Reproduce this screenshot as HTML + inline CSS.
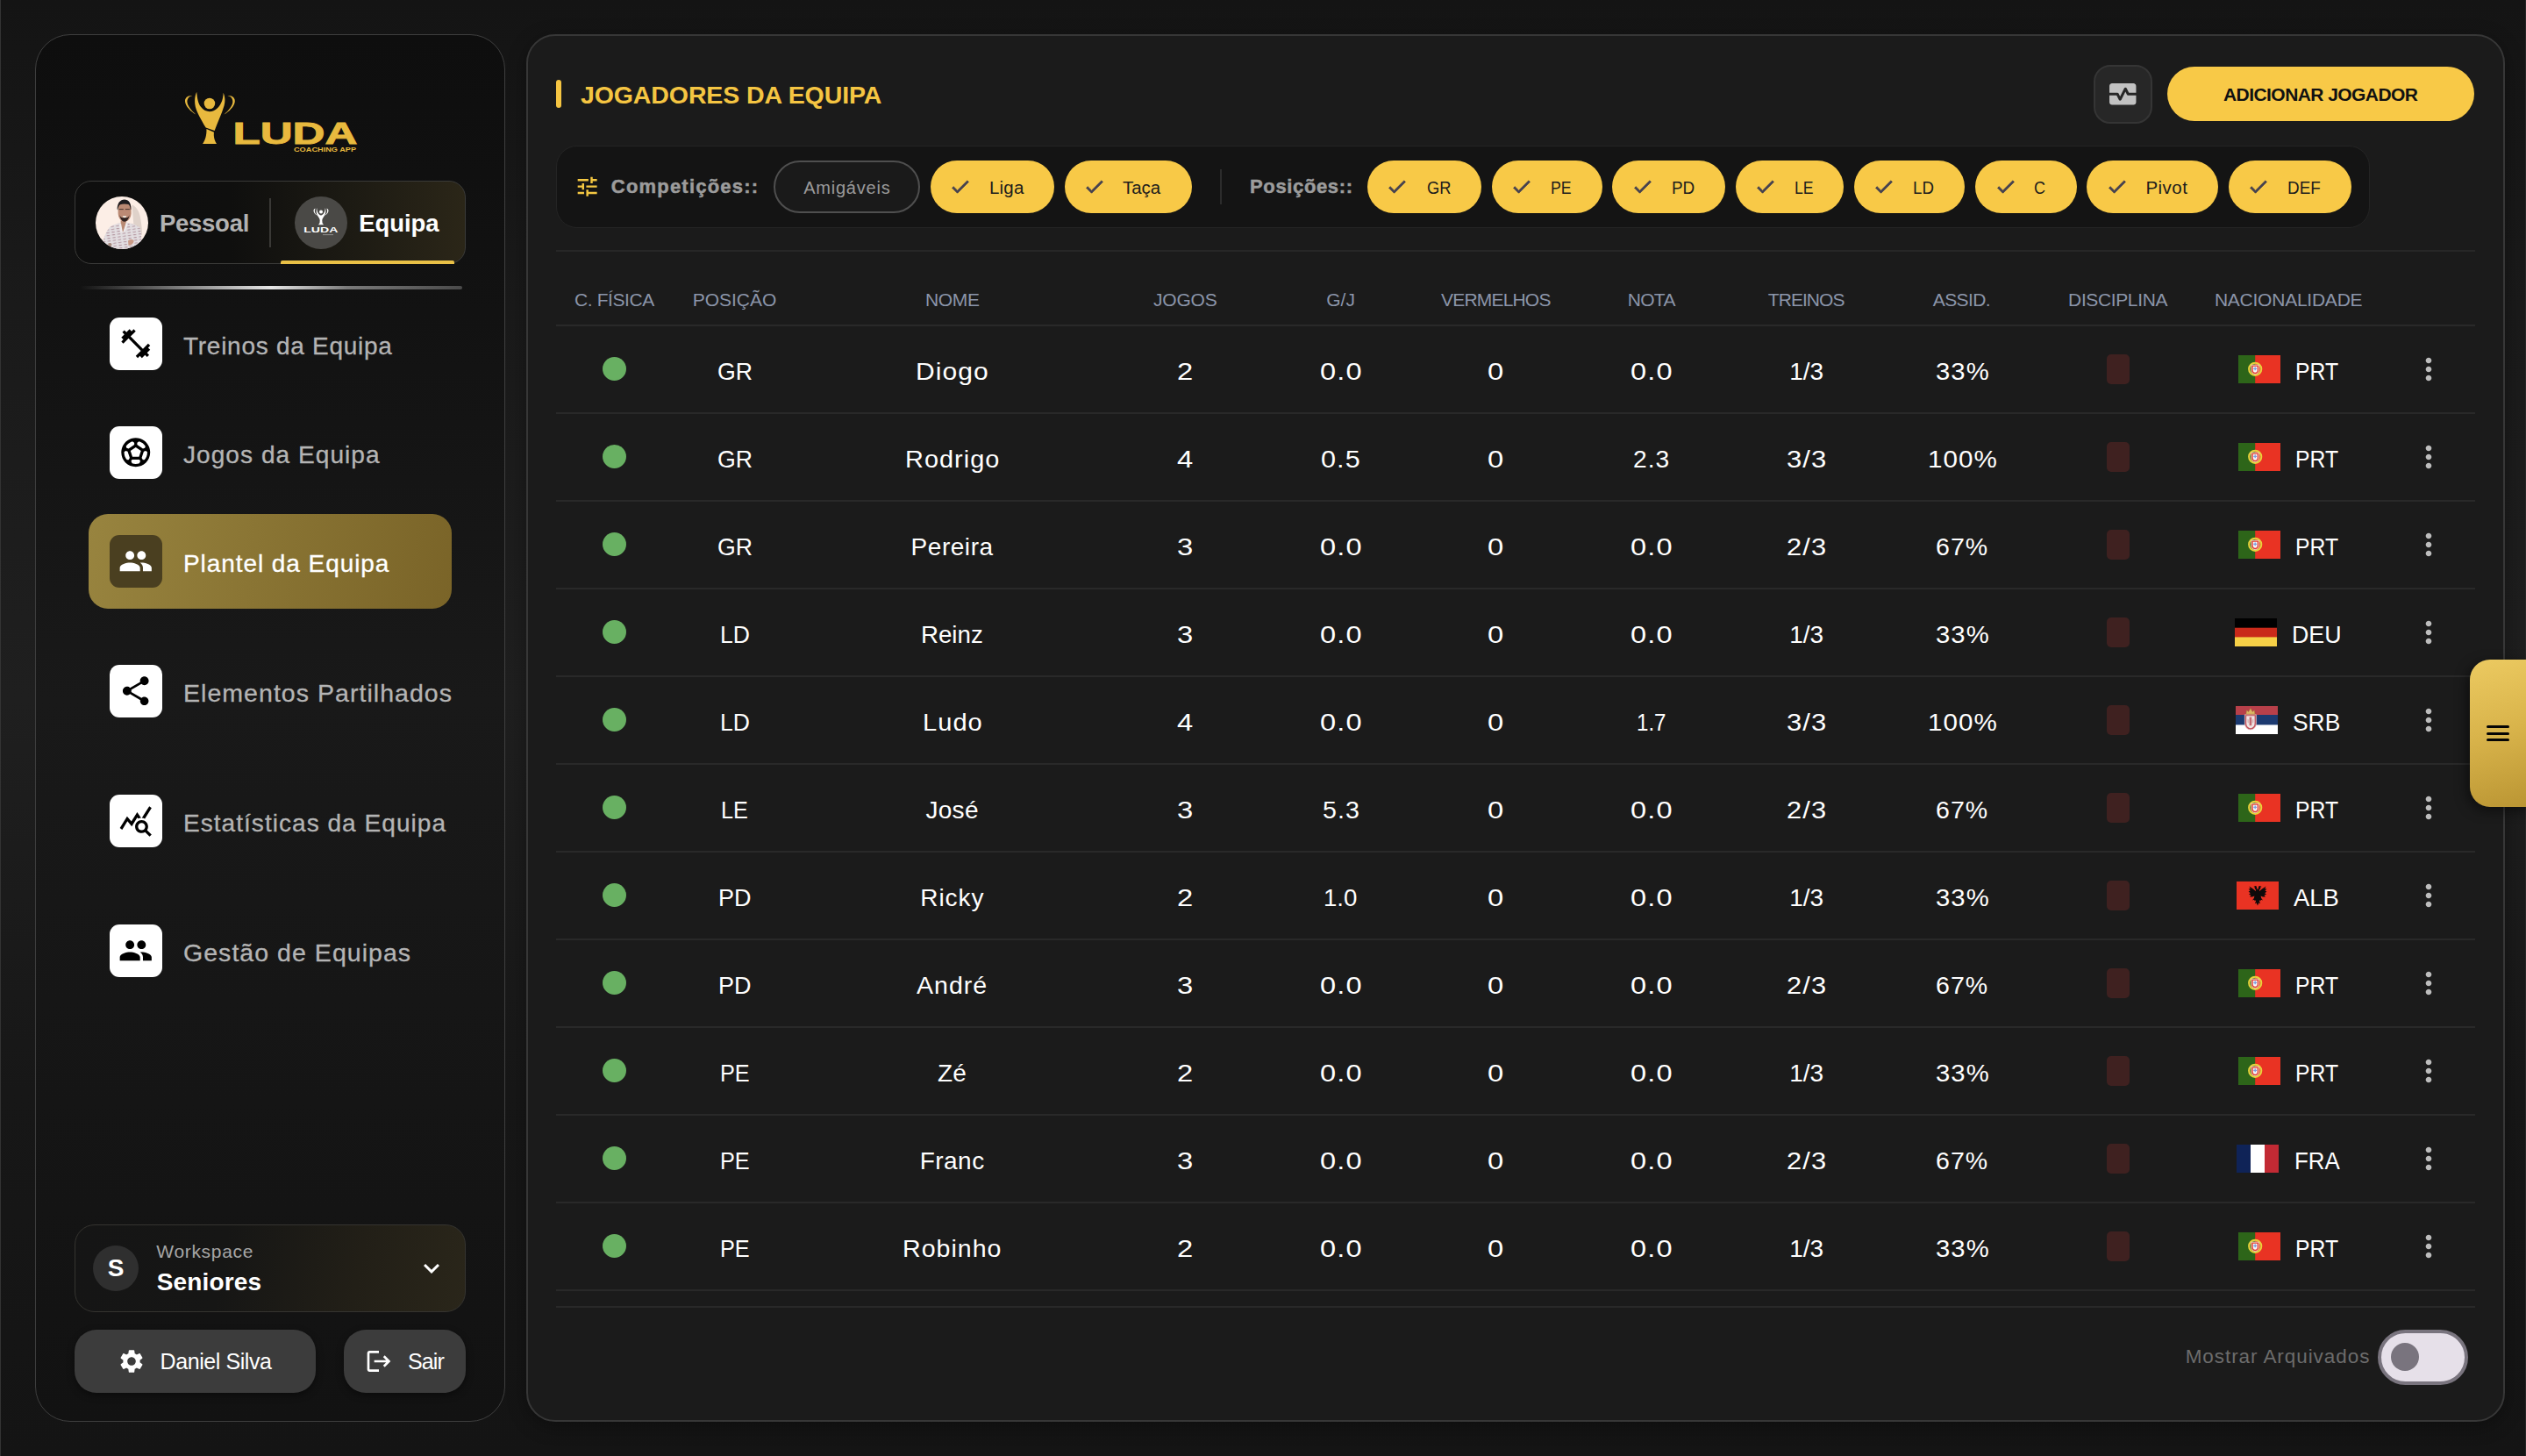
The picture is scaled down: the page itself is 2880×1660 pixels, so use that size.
<!DOCTYPE html>
<html lang="pt"><head><meta charset="utf-8"><title>LUDA Coaching App - Plantel da Equipa</title>
<style>
*{box-sizing:border-box;margin:0;padding:0}
html,body{width:2880px;height:1660px;overflow:hidden}
body{position:relative;font-family:"Liberation Sans",sans-serif;background:#121212;
background:linear-gradient(180deg,#141414 0%,#1a1a1a 21%,#1f1f1f 48%,#171717 75%,#141414 100%);}
.t{position:absolute;white-space:nowrap;line-height:1;font-family:"Liberation Sans",sans-serif}
.i{position:absolute;display:block;overflow:visible}
.b{position:absolute}
aside,main{display:block;height:0;width:0}
</style></head><body>

<div class="b" style="left:0px;top:0px;width:1px;height:1660px;background:#333"></div>
<div class="b" style="left:2879px;top:0px;width:1px;height:1660px;background:#262626"></div>
<aside>
<div class="b" style="left:40px;top:39px;width:536px;height:1581.5px;border:1px solid #3e3e3e;border-radius:40px;background:linear-gradient(180deg,#0e0e0e 0%,#121212 20%,#191919 48%,#151515 77%,#121212 100%)"></div>
<svg class="i" style="left:190px;top:90px" width="240" height="100" viewBox="0 0 2526 1052">
<g fill="#e8b93e">
<circle cx="515" cy="295" r="66"/>
<path d="M360 155C340 200 330 262 345 330C362 402 412 482 470 585L575 622C610 520 660 420 690 320C706 260 700 210 680 165C680 232 660 300 610 350C580 380 550 392 515 392C480 392 440 375 410 335C375 290 365 220 360 155Z"/>
<path d="M478 600L568 640C560 700 580 750 600 778L432 778C460 740 482 680 478 600Z"/>
<path d="M310 200C250 195 215 230 222 275C230 330 290 390 350 425C300 385 255 330 248 285C242 240 265 210 310 200Z"/>
<path d="M730 200C790 195 825 230 818 275C810 330 750 390 690 425C740 385 785 330 792 285C798 240 775 210 730 200Z"/>
</g></svg>
<svg class="i" style="left:266px;top:130px" width="150" height="50" viewBox="0 0 150 50"><text x="-0.600" y="34.1" font-family="Liberation Sans, sans-serif" font-weight="700" font-size="35" fill="#e8b93e" stroke="#e8b93e" stroke-width="0.900" textLength="142" lengthAdjust="spacingAndGlyphs">LUDA</text><text x="69" y="43.2" font-family="Liberation Sans, sans-serif" font-weight="700" font-size="6.6" fill="#e8b93e" textLength="71" lengthAdjust="spacingAndGlyphs">COACHING APP</text></svg>
<div class="b" style="left:85px;top:206px;width:446px;height:95px;border:1.5px solid #3a3a38;border-radius:19px;background:linear-gradient(90deg,#0e0e0e 0%,#0f0f0e 40%,#1c1a13 70%,#2b2618 100%);overflow:hidden"></div>
<div class="b" style="left:320px;top:297px;width:198px;height:4px;background:#e9c046;border-radius:2px 2px 0 0"></div>
<div class="b" style="left:307px;top:226px;width:2px;height:56px;background:#3a3936"></div>
<svg class="i" style="left:109px;top:223.500px" width="60" height="60" viewBox="0 0 60 60">
<defs><clipPath id="av"><circle cx="30" cy="30" r="30"/></clipPath>
<pattern id="sh" width="6" height="3.200" patternUnits="userSpaceOnUse" patternTransform="rotate(-8)"><rect width="6" height="3.200" fill="#e2dde0"/><rect x="0.500" y="1" width="3.400" height="0.800" fill="#a47f8b"/></pattern></defs>
<g clip-path="url(#av)"><rect width="60" height="60" fill="#fceee6"/>
<path d="M41.500 9.500C46 11 50 17 51 24C52 30 53 36 53 44L44 40Z" fill="#dfd2ca"/>
<path d="M7 60C8 50 11 41 16 35C20 32 25 31 29 30L34.500 29.500C40 30.500 46 32 50 35C52.500 38 52.500 50 52 60Z" fill="url(#sh)"/>
<path d="M28.600 27.500L34.600 27.500L35 32L31 41.500L28.800 35Z" fill="#b98a74"/>
<path d="M29 30.500L31 41.500L28.200 40.500L27 32Z" fill="#efeaec"/><path d="M34.800 29.500L31 41.500L34 39L36.800 31.500Z" fill="#efeaec"/>
<path d="M25.600 11C25.600 7 28.500 5.200 32.600 5.200C36.800 5.200 40 7.500 40.400 11.500L40.600 19C40.400 24 37.500 28.800 33 28.800C28.600 28.800 25.800 24 25.600 19Z" fill="#bb8a74"/>
<path d="M25.300 15.500L24.600 14.200C25 7.500 28 3.700 32.800 3.600C37.600 3.700 40.600 7.400 40.400 14.500L39.800 15.500C39.600 11.800 38.600 9.600 37.400 9C34.600 8.200 30.600 8.200 28 9.200C26.400 10.200 25.600 12.500 25.300 15.500Z" fill="#1e1c1f"/>
<path d="M26.800 14.600h5M33.800 14.600h5" stroke="#3b2a26" stroke-width="0.900"/>
<path d="M27.300 21C28.200 25.500 30.200 28.700 33 28.700C35.800 28.700 37.800 25.500 38.700 21C37.600 23.500 36.200 24.600 35 24.200L31 24.200C29.800 24.600 28.400 23.500 27.300 21Z" fill="#2e2220"/>
<path d="M30.700 22.300h4.600C35 23.600 34.200 24.300 33 24.300C31.800 24.300 31 23.600 30.700 22.300Z" fill="#f4efe6"/>
<path d="M37 50.500C39.500 48.800 42 48.600 43.500 50.200C43.800 53 41 55.800 37.500 56Z" fill="#c99a86"/>
<path d="M14.500 53.500C16 52.500 18 53 18.600 54.500L17 58L14 57Z" fill="#a98c80"/>
</g></svg>
<div class="b" style="left:336px;top:223.5px;width:60px;height:60px;border-radius:50%;background:#4a4946"></div>
<svg class="i" style="left:336px;top:223.500px" width="60" height="60" viewBox="0 0 60 60">
<g fill="#fff" transform="translate(30 13) scale(0.86) translate(-29.5 -13)"><circle cx="29.500" cy="18.200" r="2.300"/>
<path d="M24.000 13.000c0 5 2 9 5.500 10c3.500-1 5.500-5 5.500-10c1.500 4 .6 9-2 12c-1 1.500-1.800 2.600-2 4.500l.3 3.500l1.700 2.500h-7l1.700-2.500l.3-3.500c-.2-1.900-1-3-2-4.500c-2.600-3-3.500-8-2-12z"/>
<path d="M22.500 14c-2.500 0-3.500 2-2.500 4.500c.8 2 2.500 3.500 4.500 4.600c-1.800-1.800-3-3.400-3.300-5.400c-.2-1.600.3-2.900 1.300-3.700zM36.500 14c2.500 0 3.500 2 2.500 4.500c-.8 2-2.500 3.500-4.500 4.600c1.800-1.800 3-3.400 3.300-5.400c.2-1.600-.3-2.900-1.300-3.700z"/>
</g>
<text x="10.300" y="41.200" font-family="Liberation Sans, sans-serif" font-weight="700" font-size="9" fill="#fff" textLength="39" lengthAdjust="spacingAndGlyphs">LUDA</text>
<rect x="32" y="43.300" width="12" height="0.800" fill="#ddd" opacity=".6"/>
</svg>
<span class="t" style="left:182.00px;top:241.32px;font-size:27.5px;font-weight:700;color:#b2b2b2;letter-spacing:-0.275px;">Pessoal</span>
<span class="t" style="left:409.30px;top:241.32px;font-size:27.5px;font-weight:700;color:#ffffff;letter-spacing:-0.090px;">Equipa</span>
<div class="b" style="left:91px;top:326px;width:436px;height:4px;border-radius:2px;background:linear-gradient(90deg,rgba(120,120,120,0) 0%,#5a5a5a 18%,#e6e6e6 50%,#7a7a7a 70%,#4a4a4a 100%)"></div>
<div class="b" style="left:101px;top:585.5px;width:414px;height:108px;border-radius:22px;background:linear-gradient(100deg,#98843f 0%,#8a7534 45%,#7a6428 100%)"></div>
<div class="b" style="left:125px;top:362px;width:60px;height:60px;border-radius:11px;background:#ffffff"></div>
<svg class="i" style="left:135.25px;top:372.25px" width="39.5" height="39.5" viewBox="0 0 24 24"><path fill="#000000" d="M20.57 14.86L22 13.43 20.57 12 17 15.57 8.43 7 12 3.43 10.57 2 9.14 3.43 7.71 2 5.57 4.14 4.14 2.71 2.71 4.14l1.43 1.43L2 7.71l1.43 1.43L2 10.57 3.43 12 7 8.43 15.57 17 12 20.57 13.43 22l1.43-1.43L16.29 22l2.14-2.14 1.43 1.43 1.43-1.43-1.43-1.43L22 16.29z"/></svg>
<span class="t" style="left:209.00px;top:380.80px;font-size:28px;font-weight:400;color:#b4b4b4;letter-spacing:0.726px;-webkit-text-stroke:0.3px #b4b4b4;">Treinos da Equipa</span>
<div class="b" style="left:125px;top:486px;width:60px;height:60px;border-radius:11px;background:#ffffff"></div>
<svg class="i" style="left:135.25px;top:496.25px" width="39.5" height="39.5" viewBox="0 0 24 24"><path fill="#000000" d="M12 2C6.48 2 2 6.48 2 12s4.48 10 10 10 10-4.48 10-10S17.52 2 12 2zm1 3.3l1.35-.95c1.82.56 3.37 1.76 4.38 3.34l-.39 1.34-1.35.46L13 6.7V5.3zm-3.35-.95L11 5.3v1.4L7.01 9.49l-1.35-.46-.39-1.34c1.01-1.57 2.56-2.77 4.38-3.34zM7.08 17.11l-1.14.1C4.73 15.81 4 13.99 4 12c0-.12.01-.23.02-.35l1-.73 1.38.48 1.46 4.34-.78 1.37zm7.42 2.48c-.79.26-1.63.41-2.5.41s-1.71-.15-2.5-.41l-.69-1.49.64-1.1h5.11l.64 1.11-.7 1.48zM14.27 15H9.73l-1.35-4.02L12 8.44l3.63 2.54L14.27 15zm3.79 2.21l-1.14-.1-.79-1.37 1.46-4.34 1.39-.47 1 .73c.01.11.02.22.02.34 0 1.99-.73 3.81-1.94 5.21z"/></svg>
<span class="t" style="left:209.00px;top:504.80px;font-size:28px;font-weight:400;color:#b4b4b4;letter-spacing:1.000px;transform:scaleX(1.0043);transform-origin:0 50%;-webkit-text-stroke:0.3px #b4b4b4;">Jogos da Equipa</span>
<div class="b" style="left:125px;top:610px;width:60px;height:60px;border-radius:11px;background:#4a3f20"></div>
<svg class="i" style="left:135.25px;top:620.25px" width="39.5" height="39.5" viewBox="0 0 24 24"><path fill="#ffffff" d="M16 11c1.66 0 2.99-1.34 2.99-3S17.66 5 16 5c-1.66 0-3 1.34-3 3s1.34 3 3 3zm-8 0c1.66 0 2.99-1.34 2.99-3S9.66 5 8 5C6.34 5 5 6.34 5 8s1.34 3 3 3zm0 2c-2.33 0-7 1.17-7 3.5V19h14v-2.5c0-2.33-4.67-3.5-7-3.5zm8 0c-.29 0-.62.02-.97.05 1.16.84 1.97 1.97 1.97 3.45V19h6v-2.5c0-2.33-4.67-3.5-7-3.5z"/></svg>
<span class="t" style="left:209.00px;top:628.80px;font-size:28px;font-weight:400;color:#ffffff;letter-spacing:0.934px;-webkit-text-stroke:0.3px #ffffff;">Plantel da Equipa</span>
<div class="b" style="left:125px;top:758px;width:60px;height:60px;border-radius:11px;background:#ffffff"></div>
<svg class="i" style="left:135.25px;top:768.25px" width="39.5" height="39.5" viewBox="0 0 24 24"><path fill="#000000" d="M18 16.08c-.76 0-1.44.3-1.96.77L8.91 12.7c.05-.23.09-.46.09-.7s-.04-.47-.09-.7l7.05-4.11c.54.5 1.25.81 2.04.81 1.66 0 3-1.34 3-3s-1.34-3-3-3-3 1.34-3 3c0 .24.04.47.09.7L8.04 9.81C7.5 9.31 6.79 9 6 9c-1.66 0-3 1.34-3 3s1.34 3 3 3c.79 0 1.5-.31 2.04-.81l7.12 4.16c-.05.21-.08.43-.08.65 0 1.61 1.31 2.92 2.92 2.92 1.61 0 2.92-1.31 2.92-2.92s-1.31-2.92-2.92-2.92z"/></svg>
<span class="t" style="left:209.00px;top:776.80px;font-size:28px;font-weight:400;color:#b4b4b4;letter-spacing:1.000px;transform:scaleX(1.0195);transform-origin:0 50%;-webkit-text-stroke:0.3px #b4b4b4;">Elementos Partilhados</span>
<div class="b" style="left:125px;top:906px;width:60px;height:60px;border-radius:11px;background:#ffffff"></div>
<svg class="i" style="left:135.25px;top:916.25px" width="39.5" height="39.5" viewBox="0 0 24 24"><path fill="#000000" d="M19.88 18.47c.44-.7.7-1.51.7-2.39 0-2.49-2.01-4.5-4.5-4.5s-4.5 2.01-4.5 4.5 2.01 4.5 4.49 4.5c.88 0 1.7-.26 2.39-.7L21.58 23 23 21.58l-3.12-3.11zm-3.8.11c-1.38 0-2.5-1.12-2.5-2.5s1.12-2.5 2.5-2.5 2.5 1.12 2.5 2.5-1.12 2.5-2.5 2.5zm-.36-8.5c-.74.02-1.45.18-2.1.45l-.55-.83-3.8 6.18-3.01-3.52-3.63 5.81L1 17l5-8 3 3.5L13 6l2.72 4.08zm2.59.5c-.64-.28-1.33-.45-2.05-.49L21.38 2 23 3.18l-4.69 7.4z"/></svg>
<span class="t" style="left:209.00px;top:924.80px;font-size:28px;font-weight:400;color:#b4b4b4;letter-spacing:1.000px;transform:scaleX(1.0034);transform-origin:0 50%;-webkit-text-stroke:0.3px #b4b4b4;">Estatísticas da Equipa</span>
<div class="b" style="left:125px;top:1054px;width:60px;height:60px;border-radius:11px;background:#ffffff"></div>
<svg class="i" style="left:135.25px;top:1064.25px" width="39.5" height="39.5" viewBox="0 0 24 24"><path fill="#000000" d="M16 11c1.66 0 2.99-1.34 2.99-3S17.66 5 16 5c-1.66 0-3 1.34-3 3s1.34 3 3 3zm-8 0c1.66 0 2.99-1.34 2.99-3S9.66 5 8 5C6.34 5 5 6.34 5 8s1.34 3 3 3zm0 2c-2.33 0-7 1.17-7 3.5V19h14v-2.5c0-2.33-4.67-3.5-7-3.5zm8 0c-.29 0-.62.02-.97.05 1.16.84 1.97 1.97 1.97 3.45V19h6v-2.5c0-2.33-4.67-3.5-7-3.5z"/></svg>
<span class="t" style="left:209.00px;top:1072.80px;font-size:28px;font-weight:400;color:#b4b4b4;letter-spacing:1.000px;transform:scaleX(1.0195);transform-origin:0 50%;-webkit-text-stroke:0.3px #b4b4b4;">Gestão de Equipas</span>
<div class="b" style="left:85px;top:1396px;width:446px;height:99.5px;border:1.5px solid #353430;border-radius:23px;background:linear-gradient(100deg,#151515 0%,#161615 38%,#221f17 72%,#2a261a 100%)"></div>
<div class="b" style="left:106px;top:1420px;width:52px;height:52px;border-radius:50%;background:#2f2f2f"></div>
<span class="t" style="left:122.69px;top:1432.10px;font-size:28px;font-weight:700;color:#fff;letter-spacing:0.000px;">S</span>
<span class="t" style="left:178.30px;top:1416.02px;font-size:21px;font-weight:400;color:#a6a6a6;letter-spacing:0.677px;">Workspace</span>
<span class="t" style="left:178.80px;top:1447.90px;font-size:28px;font-weight:700;color:#fff;letter-spacing:0.129px;">Seniores</span>
<svg class="i" style="left:474.00px;top:1427.80px" width="36" height="36" viewBox="0 0 24 24"><path fill="#fff" d="M16.59 8.59L12 13.17 7.41 8.59 6 10l6 6 6-6z"/></svg>
<div class="b" style="left:85px;top:1516px;width:275px;height:72px;border-radius:25px;background:#3c3c3c;box-shadow:0 3px 8px rgba(0,0,0,.4)"></div>
<div class="b" style="left:392px;top:1516px;width:139px;height:72px;border-radius:25px;background:#3c3c3c;box-shadow:0 3px 8px rgba(0,0,0,.4)"></div>
<svg class="i" style="left:133.70px;top:1536.00px" width="32" height="32" viewBox="0 0 24 24"><path fill="#fff" d="M19.14 12.94c.04-.3.06-.61.06-.94 0-.32-.02-.64-.07-.94l2.03-1.58c.18-.14.23-.41.12-.61l-1.92-3.32c-.12-.22-.37-.29-.59-.22l-2.39.96c-.5-.38-1.03-.7-1.62-.94l-.36-2.54c-.04-.24-.24-.41-.48-.41h-3.84c-.24 0-.43.17-.47.41l-.36 2.54c-.59.24-1.13.57-1.62.94l-2.39-.96c-.22-.08-.47 0-.59.22L2.74 8.87c-.12.21-.08.47.12.61l2.03 1.58c-.05.3-.09.63-.09.94s.02.64.07.94l-2.03 1.58c-.18.14-.23.41-.12.61l1.92 3.32c.12.22.37.29.59.22l2.39-.96c.5.38 1.03.7 1.62.94l.36 2.54c.05.24.24.41.48.41h3.84c.24 0 .44-.17.47-.41l.36-2.54c.59-.24 1.13-.56 1.62-.94l2.39.96c.22.08.47 0 .59-.22l1.92-3.32c.12-.22.07-.47-.12-.61l-2.01-1.58zM12 15.6c-1.98 0-3.6-1.62-3.6-3.6s1.62-3.6 3.6-3.6 3.6 1.62 3.6 3.6-1.62 3.6-3.6 3.6z"/></svg>
<span class="t" style="left:182.60px;top:1539.84px;font-size:25px;font-weight:400;color:#fff;letter-spacing:-0.430px;">Daniel Silva</span>
<svg class="i" style="left:415.60px;top:1536.00px" width="32" height="32" viewBox="0 0 24 24"><path fill="#fff" d="M17 7l-1.41 1.41L18.17 11H8v2h10.17l-2.58 2.58L17 17l5-5zM4 5h8V3H4c-1.1 0-2 .9-2 2v14c0 1.1.9 2 2 2h8v-2H4V5z"/></svg>
<span class="t" style="left:465.00px;top:1539.84px;font-size:25px;font-weight:400;color:#fff;letter-spacing:-0.900px;">Sair</span>
</aside>
<main>
<div class="b" style="left:600px;top:39px;width:2256px;height:1582px;border:2px solid #373737;border-radius:33px;background:#1b1b1b;box-shadow:0 5px 22px rgba(0,0,0,.33)"></div>
<div class="b" style="left:634px;top:91px;width:6px;height:32px;background:#f5c542;border-radius:3px"></div>
<span class="t" style="left:662.00px;top:94.47px;font-size:28.5px;font-weight:700;color:#f5c542;letter-spacing:-0.104px;">JOGADORES DA EQUIPA</span>
<div class="b" style="left:2386.5px;top:73.5px;width:67.5px;height:67px;border:2px solid #353535;border-radius:19px;background:#272727"></div>
<svg class="i" style="left:2402.05px;top:88.75px" width="36.5" height="36.5" viewBox="0 0 24 24"><path fill="#c2c2c2" d="M15.11 12.45L14 10.24l-3.11 6.21c-.16.34-.51.55-.89.55s-.73-.21-.89-.55L7.38 13H2v5c0 1.1.9 2 2 2h16c1.1 0 2-.9 2-2v-5h-6c-.38 0-.73-.21-.89-.55zM20 4H4c-1.1 0-2 .9-2 2v5h6c.38 0 .73.21.89.55L10 13.76l3.11-6.21c.34-.68 1.45-.68 1.79 0L16.62 11H22V6c0-1.1-.9-2-2-2z"/></svg>
<div class="b" style="left:2471px;top:76px;width:350px;height:62px;border-radius:31px;background:#f8c947"></div>
<span class="t" style="left:2535.00px;top:97.42px;font-size:21px;font-weight:700;color:#111;letter-spacing:-0.562px;">ADICIONAR JOGADOR</span>
<div class="b" style="left:634px;top:166px;width:2067.5px;height:94px;border:1.5px solid #242424;border-radius:24px;background:#141414"></div>
<svg class="i" style="left:655.25px;top:198.35px" width="29.3" height="29.3" viewBox="0 0 24 24"><path fill="#f5c842" d="M3 17v2h6v-2H3zM3 5v2h10V5H3zm10 16v-2h8v-2h-8v-2h-2v6h2zM7 9v2H3v2h4v2h2V9H7zm14 4v-2H11v2h10zm-6-4h2V7h4V5h-4V3h-2v6z"/></svg>
<span class="t" style="left:696.80px;top:201.68px;font-size:22px;font-weight:700;color:#9c9c9c;letter-spacing:1.201px;-webkit-text-stroke:0.5px #9c9c9c;">Competições::</span>
<div class="b" style="left:882px;top:183px;width:167.3px;height:60px;border:2px solid #4f4f4f;border-radius:30px;background:#1a1a1a"></div>
<span class="t" style="left:916.20px;top:204.07px;font-size:20px;font-weight:400;color:#9a9a9a;letter-spacing:0.775px;">Amigáveis</span>
<div class="b" style="left:1060.8px;top:183px;width:141.2px;height:60px;border-radius:30px;background:#f8c947"></div>
<svg class="i" style="left:1082.35px;top:200.25px" width="25.5" height="25.5" viewBox="0 0 24 24"><path fill="#45414f" stroke="#45414f" stroke-width="0.9" stroke-linejoin="round" d="M9 16.17L4.83 12l-1.42 1.41L9 19 21 7l-1.41-1.41z"/></svg>
<span class="t" style="left:1128.00px;top:203.85px;font-size:20.5px;font-weight:400;color:#1c1c1c;letter-spacing:0.184px;">Liga</span>
<div class="b" style="left:1213.7px;top:183px;width:145.1px;height:60px;border-radius:30px;background:#f8c947"></div>
<svg class="i" style="left:1235.25px;top:200.25px" width="25.5" height="25.5" viewBox="0 0 24 24"><path fill="#45414f" stroke="#45414f" stroke-width="0.9" stroke-linejoin="round" d="M9 16.17L4.83 12l-1.42 1.41L9 19 21 7l-1.41-1.41z"/></svg>
<span class="t" style="left:1280.09px;top:203.85px;font-size:20.5px;font-weight:400;color:#1c1c1c;letter-spacing:0.000px;transform:scaleX(0.9979);transform-origin:0 50%;">Taça</span>
<div class="b" style="left:1390.5px;top:193px;width:2px;height:40px;background:#2c2c2c"></div>
<span class="t" style="left:1425.00px;top:201.68px;font-size:22px;font-weight:700;color:#9c9c9c;letter-spacing:0.643px;-webkit-text-stroke:0.5px #9c9c9c;">Posições::</span>
<div class="b" style="left:1558.7px;top:183px;width:130.7px;height:60px;border-radius:30px;background:#f8c947"></div>
<svg class="i" style="left:1580.25px;top:200.25px" width="25.5" height="25.5" viewBox="0 0 24 24"><path fill="#45414f" stroke="#45414f" stroke-width="0.9" stroke-linejoin="round" d="M9 16.17L4.83 12l-1.42 1.41L9 19 21 7l-1.41-1.41z"/></svg>
<span class="t" style="left:1626.50px;top:203.85px;font-size:20.5px;font-weight:400;color:#1c1c1c;letter-spacing:0.000px;transform:scaleX(0.8911);transform-origin:0 50%;">GR</span>
<div class="b" style="left:1700.6px;top:183px;width:126.4px;height:60px;border-radius:30px;background:#f8c947"></div>
<svg class="i" style="left:1722.15px;top:200.25px" width="25.5" height="25.5" viewBox="0 0 24 24"><path fill="#45414f" stroke="#45414f" stroke-width="0.9" stroke-linejoin="round" d="M9 16.17L4.83 12l-1.42 1.41L9 19 21 7l-1.41-1.41z"/></svg>
<span class="t" style="left:1768.40px;top:203.85px;font-size:20.5px;font-weight:400;color:#1c1c1c;letter-spacing:0.000px;transform:scaleX(0.8642);transform-origin:0 50%;">PE</span>
<div class="b" style="left:1838.4px;top:183px;width:128.3px;height:60px;border-radius:30px;background:#f8c947"></div>
<svg class="i" style="left:1859.95px;top:200.25px" width="25.5" height="25.5" viewBox="0 0 24 24"><path fill="#45414f" stroke="#45414f" stroke-width="0.9" stroke-linejoin="round" d="M9 16.17L4.83 12l-1.42 1.41L9 19 21 7l-1.41-1.41z"/></svg>
<span class="t" style="left:1905.86px;top:203.85px;font-size:20.5px;font-weight:400;color:#1c1c1c;letter-spacing:0.000px;transform:scaleX(0.9211);transform-origin:0 50%;">PD</span>
<div class="b" style="left:1978.8px;top:183px;width:123.5px;height:60px;border-radius:30px;background:#f8c947"></div>
<svg class="i" style="left:2000.35px;top:200.25px" width="25.5" height="25.5" viewBox="0 0 24 24"><path fill="#45414f" stroke="#45414f" stroke-width="0.9" stroke-linejoin="round" d="M9 16.17L4.83 12l-1.42 1.41L9 19 21 7l-1.41-1.41z"/></svg>
<span class="t" style="left:2046.03px;top:203.85px;font-size:20.5px;font-weight:400;color:#1c1c1c;letter-spacing:0.000px;transform:scaleX(0.8614);transform-origin:0 50%;">LE</span>
<div class="b" style="left:2113.8px;top:183px;width:126.1px;height:60px;border-radius:30px;background:#f8c947"></div>
<svg class="i" style="left:2135.35px;top:200.25px" width="25.5" height="25.5" viewBox="0 0 24 24"><path fill="#45414f" stroke="#45414f" stroke-width="0.9" stroke-linejoin="round" d="M9 16.17L4.83 12l-1.42 1.41L9 19 21 7l-1.41-1.41z"/></svg>
<span class="t" style="left:2181.31px;top:203.85px;font-size:20.5px;font-weight:400;color:#1c1c1c;letter-spacing:0.000px;transform:scaleX(0.9123);transform-origin:0 50%;">LD</span>
<div class="b" style="left:2252px;top:183px;width:115.6px;height:60px;border-radius:30px;background:#f8c947"></div>
<svg class="i" style="left:2273.55px;top:200.25px" width="25.5" height="25.5" viewBox="0 0 24 24"><path fill="#45414f" stroke="#45414f" stroke-width="0.9" stroke-linejoin="round" d="M9 16.17L4.83 12l-1.42 1.41L9 19 21 7l-1.41-1.41z"/></svg>
<span class="t" style="left:2319.18px;top:203.85px;font-size:20.5px;font-weight:400;color:#1c1c1c;letter-spacing:0.000px;transform:scaleX(0.8794);transform-origin:0 50%;">C</span>
<div class="b" style="left:2379.2px;top:183px;width:150px;height:60px;border-radius:30px;background:#f8c947"></div>
<svg class="i" style="left:2400.75px;top:200.25px" width="25.5" height="25.5" viewBox="0 0 24 24"><path fill="#45414f" stroke="#45414f" stroke-width="0.9" stroke-linejoin="round" d="M9 16.17L4.83 12l-1.42 1.41L9 19 21 7l-1.41-1.41z"/></svg>
<span class="t" style="left:2446.41px;top:203.85px;font-size:20.5px;font-weight:400;color:#1c1c1c;letter-spacing:0.495px;">Pivot</span>
<div class="b" style="left:2540.7px;top:183px;width:139.9px;height:60px;border-radius:30px;background:#f8c947"></div>
<svg class="i" style="left:2562.25px;top:200.25px" width="25.5" height="25.5" viewBox="0 0 24 24"><path fill="#45414f" stroke="#45414f" stroke-width="0.9" stroke-linejoin="round" d="M9 16.17L4.83 12l-1.42 1.41L9 19 21 7l-1.41-1.41z"/></svg>
<span class="t" style="left:2607.65px;top:203.85px;font-size:20.5px;font-weight:400;color:#1c1c1c;letter-spacing:0.000px;transform:scaleX(0.9216);transform-origin:0 50%;">DEF</span>
<div class="b" style="left:634px;top:285px;width:2187.5px;height:2px;background:#272727"></div>
<span class="t" style="left:655.00px;top:331.02px;font-size:21px;font-weight:400;color:#8b95a9;letter-spacing:-0.401px;">C. FÍSICA</span>
<span class="t" style="left:789.70px;top:331.02px;font-size:21px;font-weight:400;color:#8b95a9;letter-spacing:-0.026px;">POSIÇÃO</span>
<span class="t" style="left:1055.00px;top:331.02px;font-size:21px;font-weight:400;color:#8b95a9;letter-spacing:-0.333px;">NOME</span>
<span class="t" style="left:1315.00px;top:331.02px;font-size:21px;font-weight:400;color:#8b95a9;letter-spacing:-0.200px;">JOGOS</span>
<span class="t" style="left:1512.30px;top:331.02px;font-size:21px;font-weight:400;color:#8b95a9;letter-spacing:-0.027px;">G/J</span>
<span class="t" style="left:1643.00px;top:331.02px;font-size:21px;font-weight:400;color:#8b95a9;letter-spacing:-0.810px;">VERMELHOS</span>
<span class="t" style="left:1855.70px;top:331.02px;font-size:21px;font-weight:400;color:#8b95a9;letter-spacing:-0.668px;">NOTA</span>
<span class="t" style="left:2015.80px;top:331.02px;font-size:21px;font-weight:400;color:#8b95a9;letter-spacing:-0.957px;">TREINOS</span>
<span class="t" style="left:2203.80px;top:331.02px;font-size:21px;font-weight:400;color:#8b95a9;letter-spacing:-0.616px;">ASSID.</span>
<span class="t" style="left:2358.10px;top:331.02px;font-size:21px;font-weight:400;color:#8b95a9;letter-spacing:-0.373px;">DISCIPLINA</span>
<span class="t" style="left:2524.90px;top:331.02px;font-size:21px;font-weight:400;color:#8b95a9;letter-spacing:-0.239px;">NACIONALIDADE</span>
<div class="b" style="left:634px;top:370px;width:2187.5px;height:2px;background:#292929"></div>
<div class="b" style="left:634px;top:470px;width:2187.5px;height:2px;background:#292929"></div>
<div class="b" style="left:634px;top:570px;width:2187.5px;height:2px;background:#292929"></div>
<div class="b" style="left:634px;top:670px;width:2187.5px;height:2px;background:#292929"></div>
<div class="b" style="left:634px;top:770px;width:2187.5px;height:2px;background:#292929"></div>
<div class="b" style="left:634px;top:870px;width:2187.5px;height:2px;background:#292929"></div>
<div class="b" style="left:634px;top:970px;width:2187.5px;height:2px;background:#292929"></div>
<div class="b" style="left:634px;top:1070px;width:2187.5px;height:2px;background:#292929"></div>
<div class="b" style="left:634px;top:1170px;width:2187.5px;height:2px;background:#292929"></div>
<div class="b" style="left:634px;top:1270px;width:2187.5px;height:2px;background:#292929"></div>
<div class="b" style="left:634px;top:1370px;width:2187.5px;height:2px;background:#292929"></div>
<div class="b" style="left:634px;top:1470px;width:2187.5px;height:2px;background:#292929"></div>
<div class="b" style="left:634px;top:1489px;width:2187.5px;height:2px;background:#292929"></div>
<div class="b" style="left:687px;top:407.1px;width:27px;height:27px;border-radius:50%;background:#68b062"></div>
<span class="t" style="left:817.70px;top:409.80px;font-size:28px;font-weight:400;color:#fff;letter-spacing:0.000px;transform:scaleX(0.9524);transform-origin:0 50%;">GR</span>
<span class="t" style="left:1044.00px;top:409.80px;font-size:28px;font-weight:400;color:#fff;letter-spacing:1.000px;transform:scaleX(1.0723);transform-origin:0 50%;">Diogo</span>
<span class="t" style="left:1342.41px;top:409.80px;font-size:28px;font-weight:400;color:#fff;letter-spacing:0.000px;transform:scaleX(1.1700);transform-origin:0 50%;">2</span>
<span class="t" style="left:1504.60px;top:409.80px;font-size:28px;font-weight:400;color:#fff;letter-spacing:1.000px;transform:scaleX(1.1632);transform-origin:0 50%;">0.0</span>
<span class="t" style="left:1696.41px;top:409.80px;font-size:28px;font-weight:400;color:#fff;letter-spacing:0.000px;transform:scaleX(1.1700);transform-origin:0 50%;">0</span>
<span class="t" style="left:1858.90px;top:409.80px;font-size:28px;font-weight:400;color:#fff;letter-spacing:1.000px;transform:scaleX(1.1632);transform-origin:0 50%;">0.0</span>
<span class="t" style="left:2040.15px;top:409.80px;font-size:28px;font-weight:400;color:#fff;letter-spacing:0.000px;">1/3</span>
<span class="t" style="left:2206.70px;top:409.80px;font-size:28px;font-weight:400;color:#fff;letter-spacing:1.000px;transform:scaleX(1.0448);transform-origin:0 50%;">33%</span>
<div class="b" style="left:2401.7px;top:404.4px;width:26.6px;height:33.2px;border-radius:5px;background:#3f2120"></div>
<svg class="i" style="left:2551.7px;top:405px" width="48" height="32" viewBox="0 0 48 32"><rect width="48" height="32" fill="#e93323"/><rect width="19.2" height="32" fill="#2d6519"/><circle cx="19.2" cy="15.800" r="7.100" fill="#d8c43a" fill-opacity=".25" stroke="#e9d23c" stroke-width="2"/><path d="M14.900 11.200h8.600v5.800a4.300 4.600 0 0 1-8.600 0z" fill="#e5382b" stroke="#f3e9e4" stroke-width="0.8"/><path d="M16.700 12.800h5v4a2.500 2.900 0 0 1-5 0z" fill="#f7f7fb"/><path d="M18.500 13.600h1.400v3.600h-1.400zM17.300 14.800h3.800v1.100h-3.800z" fill="#7f9fe0"/></svg>
<span class="t" style="left:2617.20px;top:409.80px;font-size:28px;font-weight:400;color:#fff;letter-spacing:0.000px;transform:scaleX(0.8838);transform-origin:0 50%;">PRT</span>
<svg class="i" style="left:2748.60px;top:401.00px" width="40" height="40" viewBox="0 0 24 24"><path fill="#bdbdbd" d="M12 8c1.1 0 2-.9 2-2s-.9-2-2-2-2 .9-2 2 .9 2 2 2zm0 2c-1.1 0-2 .9-2 2s.9 2 2 2 2-.9 2-2-.9-2-2-2zm0 6c-1.1 0-2 .9-2 2s.9 2 2 2 2-.9 2-2-.9-2-2-2z"/></svg>
<div class="b" style="left:687px;top:507.1px;width:27px;height:27px;border-radius:50%;background:#68b062"></div>
<span class="t" style="left:817.70px;top:509.80px;font-size:28px;font-weight:400;color:#fff;letter-spacing:0.000px;transform:scaleX(0.9524);transform-origin:0 50%;">GR</span>
<span class="t" style="left:1031.75px;top:509.80px;font-size:28px;font-weight:400;color:#fff;letter-spacing:1.000px;transform:scaleX(1.0317);transform-origin:0 50%;">Rodrigo</span>
<span class="t" style="left:1342.41px;top:509.80px;font-size:28px;font-weight:400;color:#fff;letter-spacing:0.000px;transform:scaleX(1.1700);transform-origin:0 50%;">4</span>
<span class="t" style="left:1506.05px;top:509.80px;font-size:28px;font-weight:400;color:#fff;letter-spacing:1.000px;transform:scaleX(1.0924);transform-origin:0 50%;">0.5</span>
<span class="t" style="left:1696.41px;top:509.80px;font-size:28px;font-weight:400;color:#fff;letter-spacing:0.000px;transform:scaleX(1.1700);transform-origin:0 50%;">0</span>
<span class="t" style="left:1862.10px;top:509.80px;font-size:28px;font-weight:400;color:#fff;letter-spacing:1.000px;transform:scaleX(1.0068);transform-origin:0 50%;">2.3</span>
<span class="t" style="left:2036.95px;top:509.80px;font-size:28px;font-weight:400;color:#fff;letter-spacing:1.000px;transform:scaleX(1.1070);transform-origin:0 50%;">3/3</span>
<span class="t" style="left:2197.50px;top:509.80px;font-size:28px;font-weight:400;color:#fff;letter-spacing:1.000px;transform:scaleX(1.0578);transform-origin:0 50%;">100%</span>
<div class="b" style="left:2401.7px;top:504.4px;width:26.6px;height:33.2px;border-radius:5px;background:#3f2120"></div>
<svg class="i" style="left:2551.7px;top:505px" width="48" height="32" viewBox="0 0 48 32"><rect width="48" height="32" fill="#e93323"/><rect width="19.2" height="32" fill="#2d6519"/><circle cx="19.2" cy="15.800" r="7.100" fill="#d8c43a" fill-opacity=".25" stroke="#e9d23c" stroke-width="2"/><path d="M14.900 11.200h8.600v5.800a4.300 4.600 0 0 1-8.600 0z" fill="#e5382b" stroke="#f3e9e4" stroke-width="0.8"/><path d="M16.700 12.800h5v4a2.500 2.900 0 0 1-5 0z" fill="#f7f7fb"/><path d="M18.500 13.600h1.400v3.600h-1.400zM17.300 14.800h3.800v1.100h-3.800z" fill="#7f9fe0"/></svg>
<span class="t" style="left:2617.20px;top:509.80px;font-size:28px;font-weight:400;color:#fff;letter-spacing:0.000px;transform:scaleX(0.8838);transform-origin:0 50%;">PRT</span>
<svg class="i" style="left:2748.60px;top:501.00px" width="40" height="40" viewBox="0 0 24 24"><path fill="#bdbdbd" d="M12 8c1.1 0 2-.9 2-2s-.9-2-2-2-2 .9-2 2 .9 2 2 2zm0 2c-1.1 0-2 .9-2 2s.9 2 2 2 2-.9 2-2-.9-2-2-2zm0 6c-1.1 0-2 .9-2 2s.9 2 2 2 2-.9 2-2-.9-2-2-2z"/></svg>
<div class="b" style="left:687px;top:607.1px;width:27px;height:27px;border-radius:50%;background:#68b062"></div>
<span class="t" style="left:817.70px;top:609.80px;font-size:28px;font-weight:400;color:#fff;letter-spacing:0.000px;transform:scaleX(0.9524);transform-origin:0 50%;">GR</span>
<span class="t" style="left:1038.55px;top:609.80px;font-size:28px;font-weight:400;color:#fff;letter-spacing:0.543px;">Pereira</span>
<span class="t" style="left:1342.41px;top:609.80px;font-size:28px;font-weight:400;color:#fff;letter-spacing:0.000px;transform:scaleX(1.1700);transform-origin:0 50%;">3</span>
<span class="t" style="left:1504.60px;top:609.80px;font-size:28px;font-weight:400;color:#fff;letter-spacing:1.000px;transform:scaleX(1.1632);transform-origin:0 50%;">0.0</span>
<span class="t" style="left:1696.41px;top:609.80px;font-size:28px;font-weight:400;color:#fff;letter-spacing:0.000px;transform:scaleX(1.1700);transform-origin:0 50%;">0</span>
<span class="t" style="left:1858.90px;top:609.80px;font-size:28px;font-weight:400;color:#fff;letter-spacing:1.000px;transform:scaleX(1.1632);transform-origin:0 50%;">0.0</span>
<span class="t" style="left:2037.10px;top:609.80px;font-size:28px;font-weight:400;color:#fff;letter-spacing:1.000px;transform:scaleX(1.0997);transform-origin:0 50%;">2/3</span>
<span class="t" style="left:2207.45px;top:609.80px;font-size:28px;font-weight:400;color:#fff;letter-spacing:1.000px;transform:scaleX(1.0190);transform-origin:0 50%;">67%</span>
<div class="b" style="left:2401.7px;top:604.4px;width:26.6px;height:33.2px;border-radius:5px;background:#3f2120"></div>
<svg class="i" style="left:2551.7px;top:605px" width="48" height="32" viewBox="0 0 48 32"><rect width="48" height="32" fill="#e93323"/><rect width="19.2" height="32" fill="#2d6519"/><circle cx="19.2" cy="15.800" r="7.100" fill="#d8c43a" fill-opacity=".25" stroke="#e9d23c" stroke-width="2"/><path d="M14.900 11.200h8.600v5.800a4.300 4.600 0 0 1-8.600 0z" fill="#e5382b" stroke="#f3e9e4" stroke-width="0.8"/><path d="M16.700 12.800h5v4a2.500 2.900 0 0 1-5 0z" fill="#f7f7fb"/><path d="M18.500 13.600h1.400v3.600h-1.400zM17.300 14.800h3.800v1.100h-3.800z" fill="#7f9fe0"/></svg>
<span class="t" style="left:2617.20px;top:609.80px;font-size:28px;font-weight:400;color:#fff;letter-spacing:0.000px;transform:scaleX(0.8838);transform-origin:0 50%;">PRT</span>
<svg class="i" style="left:2748.60px;top:601.00px" width="40" height="40" viewBox="0 0 24 24"><path fill="#bdbdbd" d="M12 8c1.1 0 2-.9 2-2s-.9-2-2-2-2 .9-2 2 .9 2 2 2zm0 2c-1.1 0-2 .9-2 2s.9 2 2 2 2-.9 2-2-.9-2-2-2zm0 6c-1.1 0-2 .9-2 2s.9 2 2 2 2-.9 2-2-.9-2-2-2z"/></svg>
<div class="b" style="left:687px;top:707.1px;width:27px;height:27px;border-radius:50%;background:#68b062"></div>
<span class="t" style="left:820.70px;top:709.80px;font-size:28px;font-weight:400;color:#fff;letter-spacing:0.000px;transform:scaleX(0.9487);transform-origin:0 50%;">LD</span>
<span class="t" style="left:1050.05px;top:709.80px;font-size:28px;font-weight:400;color:#fff;letter-spacing:0.000px;transform:scaleX(0.9883);transform-origin:0 50%;">Reinz</span>
<span class="t" style="left:1342.41px;top:709.80px;font-size:28px;font-weight:400;color:#fff;letter-spacing:0.000px;transform:scaleX(1.1700);transform-origin:0 50%;">3</span>
<span class="t" style="left:1504.60px;top:709.80px;font-size:28px;font-weight:400;color:#fff;letter-spacing:1.000px;transform:scaleX(1.1632);transform-origin:0 50%;">0.0</span>
<span class="t" style="left:1696.41px;top:709.80px;font-size:28px;font-weight:400;color:#fff;letter-spacing:0.000px;transform:scaleX(1.1700);transform-origin:0 50%;">0</span>
<span class="t" style="left:1858.90px;top:709.80px;font-size:28px;font-weight:400;color:#fff;letter-spacing:1.000px;transform:scaleX(1.1632);transform-origin:0 50%;">0.0</span>
<span class="t" style="left:2040.15px;top:709.80px;font-size:28px;font-weight:400;color:#fff;letter-spacing:0.000px;">1/3</span>
<span class="t" style="left:2206.70px;top:709.80px;font-size:28px;font-weight:400;color:#fff;letter-spacing:1.000px;transform:scaleX(1.0448);transform-origin:0 50%;">33%</span>
<div class="b" style="left:2401.7px;top:704.4px;width:26.6px;height:33.2px;border-radius:5px;background:#3f2120"></div>
<svg class="i" style="left:2547.8px;top:705px" width="48" height="32" viewBox="0 0 48 32"><rect width="48" height="32" fill="#f6d047"/><rect width="48" height="21.4" fill="#c9291a"/><rect width="48" height="10.7" fill="#000"/></svg>
<span class="t" style="left:2612.90px;top:709.80px;font-size:28px;font-weight:400;color:#fff;letter-spacing:0.000px;transform:scaleX(0.9563);transform-origin:0 50%;">DEU</span>
<svg class="i" style="left:2748.60px;top:701.00px" width="40" height="40" viewBox="0 0 24 24"><path fill="#bdbdbd" d="M12 8c1.1 0 2-.9 2-2s-.9-2-2-2-2 .9-2 2 .9 2 2 2zm0 2c-1.1 0-2 .9-2 2s.9 2 2 2 2-.9 2-2-.9-2-2-2zm0 6c-1.1 0-2 .9-2 2s.9 2 2 2 2-.9 2-2-.9-2-2-2z"/></svg>
<div class="b" style="left:687px;top:807.1px;width:27px;height:27px;border-radius:50%;background:#68b062"></div>
<span class="t" style="left:820.70px;top:809.80px;font-size:28px;font-weight:400;color:#fff;letter-spacing:0.000px;transform:scaleX(0.9487);transform-origin:0 50%;">LD</span>
<span class="t" style="left:1051.50px;top:809.80px;font-size:28px;font-weight:400;color:#fff;letter-spacing:1.000px;transform:scaleX(1.0383);transform-origin:0 50%;">Ludo</span>
<span class="t" style="left:1342.41px;top:809.80px;font-size:28px;font-weight:400;color:#fff;letter-spacing:0.000px;transform:scaleX(1.1700);transform-origin:0 50%;">4</span>
<span class="t" style="left:1504.60px;top:809.80px;font-size:28px;font-weight:400;color:#fff;letter-spacing:1.000px;transform:scaleX(1.1632);transform-origin:0 50%;">0.0</span>
<span class="t" style="left:1696.41px;top:809.80px;font-size:28px;font-weight:400;color:#fff;letter-spacing:0.000px;transform:scaleX(1.1700);transform-origin:0 50%;">0</span>
<span class="t" style="left:1865.95px;top:809.80px;font-size:28px;font-weight:400;color:#fff;letter-spacing:0.000px;transform:scaleX(0.8607);transform-origin:0 50%;">1.7</span>
<span class="t" style="left:2036.95px;top:809.80px;font-size:28px;font-weight:400;color:#fff;letter-spacing:1.000px;transform:scaleX(1.1070);transform-origin:0 50%;">3/3</span>
<span class="t" style="left:2197.50px;top:809.80px;font-size:28px;font-weight:400;color:#fff;letter-spacing:1.000px;transform:scaleX(1.0578);transform-origin:0 50%;">100%</span>
<div class="b" style="left:2401.7px;top:804.4px;width:26.6px;height:33.2px;border-radius:5px;background:#3f2120"></div>
<svg class="i" style="left:2548.8px;top:805px" width="48" height="32" viewBox="0 0 48 32"><rect width="48" height="32" fill="#fff"/><rect width="48" height="21.400" fill="#1c3a70"/><rect width="48" height="10" fill="#b8404a"/><path d="M10.400 9.800h13v10.200a6.500 7 0 0 1-13 0z" fill="#c2525c" stroke="#e6cfd0" stroke-width="0.7"/><path d="M12.200 11.200h9.400v8.600a4.700 5.400 0 0 1-9.400 0z" fill="#efe4e4"/><path d="M15.600 12.600h2.600v9.600h-2.600z" fill="#c66a70"/><path d="M13.400 14.500l2 1.500v4l-2-1.500zM20.400 14.500l-2 1.500v4l2-1.500z" fill="#d9b9ba"/><path d="M11.800 9.200l.8-4.400 2 1.800 2.300-4 2.300 4 2-1.800.8 4.400z" fill="#dcb765" stroke="#a8743a" stroke-width="0.5"/></svg>
<span class="t" style="left:2614.30px;top:809.80px;font-size:28px;font-weight:400;color:#fff;letter-spacing:0.000px;transform:scaleX(0.9420);transform-origin:0 50%;">SRB</span>
<svg class="i" style="left:2748.60px;top:801.00px" width="40" height="40" viewBox="0 0 24 24"><path fill="#bdbdbd" d="M12 8c1.1 0 2-.9 2-2s-.9-2-2-2-2 .9-2 2 .9 2 2 2zm0 2c-1.1 0-2 .9-2 2s.9 2 2 2 2-.9 2-2-.9-2-2-2zm0 6c-1.1 0-2 .9-2 2s.9 2 2 2 2-.9 2-2-.9-2-2-2z"/></svg>
<div class="b" style="left:687px;top:907.1px;width:27px;height:27px;border-radius:50%;background:#68b062"></div>
<span class="t" style="left:822.25px;top:909.80px;font-size:28px;font-weight:400;color:#fff;letter-spacing:0.000px;transform:scaleX(0.9009);transform-origin:0 50%;">LE</span>
<span class="t" style="left:1055.40px;top:909.80px;font-size:28px;font-weight:400;color:#fff;letter-spacing:0.307px;">José</span>
<span class="t" style="left:1342.41px;top:909.80px;font-size:28px;font-weight:400;color:#fff;letter-spacing:0.000px;transform:scaleX(1.1700);transform-origin:0 50%;">3</span>
<span class="t" style="left:1507.50px;top:909.80px;font-size:28px;font-weight:400;color:#fff;letter-spacing:1.000px;transform:scaleX(1.0215);transform-origin:0 50%;">5.3</span>
<span class="t" style="left:1696.41px;top:909.80px;font-size:28px;font-weight:400;color:#fff;letter-spacing:0.000px;transform:scaleX(1.1700);transform-origin:0 50%;">0</span>
<span class="t" style="left:1858.90px;top:909.80px;font-size:28px;font-weight:400;color:#fff;letter-spacing:1.000px;transform:scaleX(1.1632);transform-origin:0 50%;">0.0</span>
<span class="t" style="left:2037.10px;top:909.80px;font-size:28px;font-weight:400;color:#fff;letter-spacing:1.000px;transform:scaleX(1.0997);transform-origin:0 50%;">2/3</span>
<span class="t" style="left:2207.45px;top:909.80px;font-size:28px;font-weight:400;color:#fff;letter-spacing:1.000px;transform:scaleX(1.0190);transform-origin:0 50%;">67%</span>
<div class="b" style="left:2401.7px;top:904.4px;width:26.6px;height:33.2px;border-radius:5px;background:#3f2120"></div>
<svg class="i" style="left:2551.7px;top:905px" width="48" height="32" viewBox="0 0 48 32"><rect width="48" height="32" fill="#e93323"/><rect width="19.2" height="32" fill="#2d6519"/><circle cx="19.2" cy="15.800" r="7.100" fill="#d8c43a" fill-opacity=".25" stroke="#e9d23c" stroke-width="2"/><path d="M14.900 11.200h8.600v5.800a4.300 4.600 0 0 1-8.600 0z" fill="#e5382b" stroke="#f3e9e4" stroke-width="0.8"/><path d="M16.700 12.800h5v4a2.500 2.900 0 0 1-5 0z" fill="#f7f7fb"/><path d="M18.500 13.600h1.400v3.600h-1.400zM17.300 14.800h3.800v1.100h-3.800z" fill="#7f9fe0"/></svg>
<span class="t" style="left:2617.20px;top:909.80px;font-size:28px;font-weight:400;color:#fff;letter-spacing:0.000px;transform:scaleX(0.8838);transform-origin:0 50%;">PRT</span>
<svg class="i" style="left:2748.60px;top:901.00px" width="40" height="40" viewBox="0 0 24 24"><path fill="#bdbdbd" d="M12 8c1.1 0 2-.9 2-2s-.9-2-2-2-2 .9-2 2 .9 2 2 2zm0 2c-1.1 0-2 .9-2 2s.9 2 2 2 2-.9 2-2-.9-2-2-2zm0 6c-1.1 0-2 .9-2 2s.9 2 2 2 2-.9 2-2-.9-2-2-2z"/></svg>
<div class="b" style="left:687px;top:1007.1px;width:27px;height:27px;border-radius:50%;background:#68b062"></div>
<span class="t" style="left:818.95px;top:1009.80px;font-size:28px;font-weight:400;color:#fff;letter-spacing:0.000px;transform:scaleX(0.9635);transform-origin:0 50%;">PD</span>
<span class="t" style="left:1049.35px;top:1009.80px;font-size:28px;font-weight:400;color:#fff;letter-spacing:0.910px;">Ricky</span>
<span class="t" style="left:1342.41px;top:1009.80px;font-size:28px;font-weight:400;color:#fff;letter-spacing:0.000px;transform:scaleX(1.1700);transform-origin:0 50%;">2</span>
<span class="t" style="left:1509.20px;top:1009.80px;font-size:28px;font-weight:400;color:#fff;letter-spacing:0.000px;transform:scaleX(0.9866);transform-origin:0 50%;">1.0</span>
<span class="t" style="left:1696.41px;top:1009.80px;font-size:28px;font-weight:400;color:#fff;letter-spacing:0.000px;transform:scaleX(1.1700);transform-origin:0 50%;">0</span>
<span class="t" style="left:1858.90px;top:1009.80px;font-size:28px;font-weight:400;color:#fff;letter-spacing:1.000px;transform:scaleX(1.1632);transform-origin:0 50%;">0.0</span>
<span class="t" style="left:2040.15px;top:1009.80px;font-size:28px;font-weight:400;color:#fff;letter-spacing:0.000px;">1/3</span>
<span class="t" style="left:2206.70px;top:1009.80px;font-size:28px;font-weight:400;color:#fff;letter-spacing:1.000px;transform:scaleX(1.0448);transform-origin:0 50%;">33%</span>
<div class="b" style="left:2401.7px;top:1004.4px;width:26.6px;height:33.2px;border-radius:5px;background:#3f2120"></div>
<svg class="i" style="left:2550.3px;top:1005px" width="48" height="32" viewBox="0 0 48 32"><rect width="48" height="32" fill="#e93323"/><path d="M24.0 9.5L25.0 7.2L25.2 5.4L26.6 5.0L28.6 6.0L27.0 6.8L27.4 8.0L26.0 9.6L26.2 11.0L29.0 8.6L33.6 5.4L32.2 8.2L34.4 8.4L32.4 10.6L34.4 11.6L32.2 13.2L34.0 14.8L31.6 15.6L32.8 17.6L30.0 17.4L27.6 16.6L28.2 19.0L30.0 21.6L28.0 20.8L27.0 22.4L26.4 21.0L26.0 22.6L27.2 25.4L25.4 24.2L24.0 27.6L22.6 24.2L20.8 25.4L22.0 22.6L21.6 21.0L21.0 22.4L20.0 20.8L18.0 21.6L19.8 19.0L20.4 16.6L18.0 17.4L15.2 17.6L16.4 15.6L14.0 14.8L15.8 13.2L13.6 11.6L15.6 10.6L13.6 8.4L15.8 8.2L14.4 5.4L19.0 8.6L21.8 11.0L22.0 9.6L20.6 8.0L21.0 6.8L19.4 6.0L21.4 5.0L22.8 5.4L23.0 7.2L24.0 9.5Z" fill="#0e0a0a"/></svg>
<span class="t" style="left:2615.20px;top:1009.80px;font-size:28px;font-weight:400;color:#fff;letter-spacing:0.000px;transform:scaleX(0.9807);transform-origin:0 50%;">ALB</span>
<svg class="i" style="left:2748.60px;top:1001.00px" width="40" height="40" viewBox="0 0 24 24"><path fill="#bdbdbd" d="M12 8c1.1 0 2-.9 2-2s-.9-2-2-2-2 .9-2 2 .9 2 2 2zm0 2c-1.1 0-2 .9-2 2s.9 2 2 2 2-.9 2-2-.9-2-2-2zm0 6c-1.1 0-2 .9-2 2s.9 2 2 2 2-.9 2-2-.9-2-2-2z"/></svg>
<div class="b" style="left:687px;top:1107.1px;width:27px;height:27px;border-radius:50%;background:#68b062"></div>
<span class="t" style="left:818.95px;top:1109.80px;font-size:28px;font-weight:400;color:#fff;letter-spacing:0.000px;transform:scaleX(0.9635);transform-origin:0 50%;">PD</span>
<span class="t" style="left:1045.30px;top:1109.80px;font-size:28px;font-weight:400;color:#fff;letter-spacing:1.000px;transform:scaleX(1.0183);transform-origin:0 50%;">André</span>
<span class="t" style="left:1342.41px;top:1109.80px;font-size:28px;font-weight:400;color:#fff;letter-spacing:0.000px;transform:scaleX(1.1700);transform-origin:0 50%;">3</span>
<span class="t" style="left:1504.60px;top:1109.80px;font-size:28px;font-weight:400;color:#fff;letter-spacing:1.000px;transform:scaleX(1.1632);transform-origin:0 50%;">0.0</span>
<span class="t" style="left:1696.41px;top:1109.80px;font-size:28px;font-weight:400;color:#fff;letter-spacing:0.000px;transform:scaleX(1.1700);transform-origin:0 50%;">0</span>
<span class="t" style="left:1858.90px;top:1109.80px;font-size:28px;font-weight:400;color:#fff;letter-spacing:1.000px;transform:scaleX(1.1632);transform-origin:0 50%;">0.0</span>
<span class="t" style="left:2037.10px;top:1109.80px;font-size:28px;font-weight:400;color:#fff;letter-spacing:1.000px;transform:scaleX(1.0997);transform-origin:0 50%;">2/3</span>
<span class="t" style="left:2207.45px;top:1109.80px;font-size:28px;font-weight:400;color:#fff;letter-spacing:1.000px;transform:scaleX(1.0190);transform-origin:0 50%;">67%</span>
<div class="b" style="left:2401.7px;top:1104.4px;width:26.6px;height:33.2px;border-radius:5px;background:#3f2120"></div>
<svg class="i" style="left:2551.7px;top:1105px" width="48" height="32" viewBox="0 0 48 32"><rect width="48" height="32" fill="#e93323"/><rect width="19.2" height="32" fill="#2d6519"/><circle cx="19.2" cy="15.800" r="7.100" fill="#d8c43a" fill-opacity=".25" stroke="#e9d23c" stroke-width="2"/><path d="M14.900 11.200h8.600v5.800a4.300 4.600 0 0 1-8.600 0z" fill="#e5382b" stroke="#f3e9e4" stroke-width="0.8"/><path d="M16.700 12.800h5v4a2.500 2.900 0 0 1-5 0z" fill="#f7f7fb"/><path d="M18.500 13.600h1.400v3.600h-1.400zM17.300 14.800h3.800v1.100h-3.800z" fill="#7f9fe0"/></svg>
<span class="t" style="left:2617.20px;top:1109.80px;font-size:28px;font-weight:400;color:#fff;letter-spacing:0.000px;transform:scaleX(0.8838);transform-origin:0 50%;">PRT</span>
<svg class="i" style="left:2748.60px;top:1101.00px" width="40" height="40" viewBox="0 0 24 24"><path fill="#bdbdbd" d="M12 8c1.1 0 2-.9 2-2s-.9-2-2-2-2 .9-2 2 .9 2 2 2zm0 2c-1.1 0-2 .9-2 2s.9 2 2 2 2-.9 2-2-.9-2-2-2zm0 6c-1.1 0-2 .9-2 2s.9 2 2 2 2-.9 2-2-.9-2-2-2z"/></svg>
<div class="b" style="left:687px;top:1207.1px;width:27px;height:27px;border-radius:50%;background:#68b062"></div>
<span class="t" style="left:820.85px;top:1209.80px;font-size:28px;font-weight:400;color:#fff;letter-spacing:0.000px;transform:scaleX(0.9016);transform-origin:0 50%;">PE</span>
<span class="t" style="left:1069.10px;top:1209.80px;font-size:28px;font-weight:400;color:#fff;letter-spacing:0.000px;">Zé</span>
<span class="t" style="left:1342.41px;top:1209.80px;font-size:28px;font-weight:400;color:#fff;letter-spacing:0.000px;transform:scaleX(1.1700);transform-origin:0 50%;">2</span>
<span class="t" style="left:1504.60px;top:1209.80px;font-size:28px;font-weight:400;color:#fff;letter-spacing:1.000px;transform:scaleX(1.1632);transform-origin:0 50%;">0.0</span>
<span class="t" style="left:1696.41px;top:1209.80px;font-size:28px;font-weight:400;color:#fff;letter-spacing:0.000px;transform:scaleX(1.1700);transform-origin:0 50%;">0</span>
<span class="t" style="left:1858.90px;top:1209.80px;font-size:28px;font-weight:400;color:#fff;letter-spacing:1.000px;transform:scaleX(1.1632);transform-origin:0 50%;">0.0</span>
<span class="t" style="left:2040.15px;top:1209.80px;font-size:28px;font-weight:400;color:#fff;letter-spacing:0.000px;">1/3</span>
<span class="t" style="left:2206.70px;top:1209.80px;font-size:28px;font-weight:400;color:#fff;letter-spacing:1.000px;transform:scaleX(1.0448);transform-origin:0 50%;">33%</span>
<div class="b" style="left:2401.7px;top:1204.4px;width:26.6px;height:33.2px;border-radius:5px;background:#3f2120"></div>
<svg class="i" style="left:2551.7px;top:1205px" width="48" height="32" viewBox="0 0 48 32"><rect width="48" height="32" fill="#e93323"/><rect width="19.2" height="32" fill="#2d6519"/><circle cx="19.2" cy="15.800" r="7.100" fill="#d8c43a" fill-opacity=".25" stroke="#e9d23c" stroke-width="2"/><path d="M14.900 11.200h8.600v5.800a4.300 4.600 0 0 1-8.600 0z" fill="#e5382b" stroke="#f3e9e4" stroke-width="0.8"/><path d="M16.700 12.800h5v4a2.500 2.900 0 0 1-5 0z" fill="#f7f7fb"/><path d="M18.500 13.600h1.400v3.600h-1.400zM17.300 14.800h3.800v1.100h-3.800z" fill="#7f9fe0"/></svg>
<span class="t" style="left:2617.20px;top:1209.80px;font-size:28px;font-weight:400;color:#fff;letter-spacing:0.000px;transform:scaleX(0.8838);transform-origin:0 50%;">PRT</span>
<svg class="i" style="left:2748.60px;top:1201.00px" width="40" height="40" viewBox="0 0 24 24"><path fill="#bdbdbd" d="M12 8c1.1 0 2-.9 2-2s-.9-2-2-2-2 .9-2 2 .9 2 2 2zm0 2c-1.1 0-2 .9-2 2s.9 2 2 2 2-.9 2-2-.9-2-2-2zm0 6c-1.1 0-2 .9-2 2s.9 2 2 2 2-.9 2-2-.9-2-2-2z"/></svg>
<div class="b" style="left:687px;top:1307.1px;width:27px;height:27px;border-radius:50%;background:#68b062"></div>
<span class="t" style="left:820.85px;top:1309.80px;font-size:28px;font-weight:400;color:#fff;letter-spacing:0.000px;transform:scaleX(0.9016);transform-origin:0 50%;">PE</span>
<span class="t" style="left:1048.65px;top:1309.80px;font-size:28px;font-weight:400;color:#fff;letter-spacing:0.490px;">Franc</span>
<span class="t" style="left:1342.41px;top:1309.80px;font-size:28px;font-weight:400;color:#fff;letter-spacing:0.000px;transform:scaleX(1.1700);transform-origin:0 50%;">3</span>
<span class="t" style="left:1504.60px;top:1309.80px;font-size:28px;font-weight:400;color:#fff;letter-spacing:1.000px;transform:scaleX(1.1632);transform-origin:0 50%;">0.0</span>
<span class="t" style="left:1696.41px;top:1309.80px;font-size:28px;font-weight:400;color:#fff;letter-spacing:0.000px;transform:scaleX(1.1700);transform-origin:0 50%;">0</span>
<span class="t" style="left:1858.90px;top:1309.80px;font-size:28px;font-weight:400;color:#fff;letter-spacing:1.000px;transform:scaleX(1.1632);transform-origin:0 50%;">0.0</span>
<span class="t" style="left:2037.10px;top:1309.80px;font-size:28px;font-weight:400;color:#fff;letter-spacing:1.000px;transform:scaleX(1.0997);transform-origin:0 50%;">2/3</span>
<span class="t" style="left:2207.45px;top:1309.80px;font-size:28px;font-weight:400;color:#fff;letter-spacing:1.000px;transform:scaleX(1.0190);transform-origin:0 50%;">67%</span>
<div class="b" style="left:2401.7px;top:1304.4px;width:26.6px;height:33.2px;border-radius:5px;background:#3f2120"></div>
<svg class="i" style="left:2550.4px;top:1305px" width="48" height="32" viewBox="0 0 48 32"><rect width="48" height="32" fill="#fff"/><rect width="16" height="32" fill="#0f2357"/><rect x="32" width="16" height="32" fill="#c22a34"/></svg>
<span class="t" style="left:2615.70px;top:1309.80px;font-size:28px;font-weight:400;color:#fff;letter-spacing:0.000px;transform:scaleX(0.9245);transform-origin:0 50%;">FRA</span>
<svg class="i" style="left:2748.60px;top:1301.00px" width="40" height="40" viewBox="0 0 24 24"><path fill="#bdbdbd" d="M12 8c1.1 0 2-.9 2-2s-.9-2-2-2-2 .9-2 2 .9 2 2 2zm0 2c-1.1 0-2 .9-2 2s.9 2 2 2 2-.9 2-2-.9-2-2-2zm0 6c-1.1 0-2 .9-2 2s.9 2 2 2 2-.9 2-2-.9-2-2-2z"/></svg>
<div class="b" style="left:687px;top:1407.1px;width:27px;height:27px;border-radius:50%;background:#68b062"></div>
<span class="t" style="left:820.85px;top:1409.80px;font-size:28px;font-weight:400;color:#fff;letter-spacing:0.000px;transform:scaleX(0.9016);transform-origin:0 50%;">PE</span>
<span class="t" style="left:1029.15px;top:1409.80px;font-size:28px;font-weight:400;color:#fff;letter-spacing:1.000px;transform:scaleX(1.0199);transform-origin:0 50%;">Robinho</span>
<span class="t" style="left:1342.41px;top:1409.80px;font-size:28px;font-weight:400;color:#fff;letter-spacing:0.000px;transform:scaleX(1.1700);transform-origin:0 50%;">2</span>
<span class="t" style="left:1504.60px;top:1409.80px;font-size:28px;font-weight:400;color:#fff;letter-spacing:1.000px;transform:scaleX(1.1632);transform-origin:0 50%;">0.0</span>
<span class="t" style="left:1696.41px;top:1409.80px;font-size:28px;font-weight:400;color:#fff;letter-spacing:0.000px;transform:scaleX(1.1700);transform-origin:0 50%;">0</span>
<span class="t" style="left:1858.90px;top:1409.80px;font-size:28px;font-weight:400;color:#fff;letter-spacing:1.000px;transform:scaleX(1.1632);transform-origin:0 50%;">0.0</span>
<span class="t" style="left:2040.15px;top:1409.80px;font-size:28px;font-weight:400;color:#fff;letter-spacing:0.000px;">1/3</span>
<span class="t" style="left:2206.70px;top:1409.80px;font-size:28px;font-weight:400;color:#fff;letter-spacing:1.000px;transform:scaleX(1.0448);transform-origin:0 50%;">33%</span>
<div class="b" style="left:2401.7px;top:1404.4px;width:26.6px;height:33.2px;border-radius:5px;background:#3f2120"></div>
<svg class="i" style="left:2551.7px;top:1405px" width="48" height="32" viewBox="0 0 48 32"><rect width="48" height="32" fill="#e93323"/><rect width="19.2" height="32" fill="#2d6519"/><circle cx="19.2" cy="15.800" r="7.100" fill="#d8c43a" fill-opacity=".25" stroke="#e9d23c" stroke-width="2"/><path d="M14.900 11.200h8.600v5.800a4.300 4.600 0 0 1-8.600 0z" fill="#e5382b" stroke="#f3e9e4" stroke-width="0.8"/><path d="M16.700 12.800h5v4a2.500 2.900 0 0 1-5 0z" fill="#f7f7fb"/><path d="M18.500 13.600h1.400v3.600h-1.400zM17.300 14.800h3.800v1.100h-3.800z" fill="#7f9fe0"/></svg>
<span class="t" style="left:2617.20px;top:1409.80px;font-size:28px;font-weight:400;color:#fff;letter-spacing:0.000px;transform:scaleX(0.8838);transform-origin:0 50%;">PRT</span>
<svg class="i" style="left:2748.60px;top:1401.00px" width="40" height="40" viewBox="0 0 24 24"><path fill="#bdbdbd" d="M12 8c1.1 0 2-.9 2-2s-.9-2-2-2-2 .9-2 2 .9 2 2 2zm0 2c-1.1 0-2 .9-2 2s.9 2 2 2 2-.9 2-2-.9-2-2-2zm0 6c-1.1 0-2 .9-2 2s.9 2 2 2 2-.9 2-2-.9-2-2-2z"/></svg>
<span class="t" style="left:2491.70px;top:1536.25px;font-size:22.5px;font-weight:400;color:#6c6c6c;letter-spacing:0.933px;">Mostrar Arquivados</span>
<div class="b" style="left:2710.5px;top:1515.5px;width:103.5px;height:63px;border:4px solid #79747e;border-radius:32px;background:#e6e0e9"></div>
<div class="b" style="left:2725.8px;top:1530.6px;width:32px;height:32px;border-radius:50%;background:#79747e"></div>
<div class="b" style="left:2816px;top:751.6px;width:70px;height:168.7px;border-radius:23px 0 0 23px;background:linear-gradient(165deg,#ecca61 0%,#d9b44b 48%,#ba9533 100%);box-shadow:-3px 4px 14px rgba(0,0,0,.5)"></div>
<div class="b" style="left:2834.8px;top:826.9px;width:26.2px;height:3px;border-radius:1.5px;background:#050505"></div>
<div class="b" style="left:2834.8px;top:834.6px;width:26.2px;height:3px;border-radius:1.5px;background:#050505"></div>
<div class="b" style="left:2834.8px;top:842.1px;width:26.2px;height:3px;border-radius:1.5px;background:#050505"></div>
</main>
</body></html>
